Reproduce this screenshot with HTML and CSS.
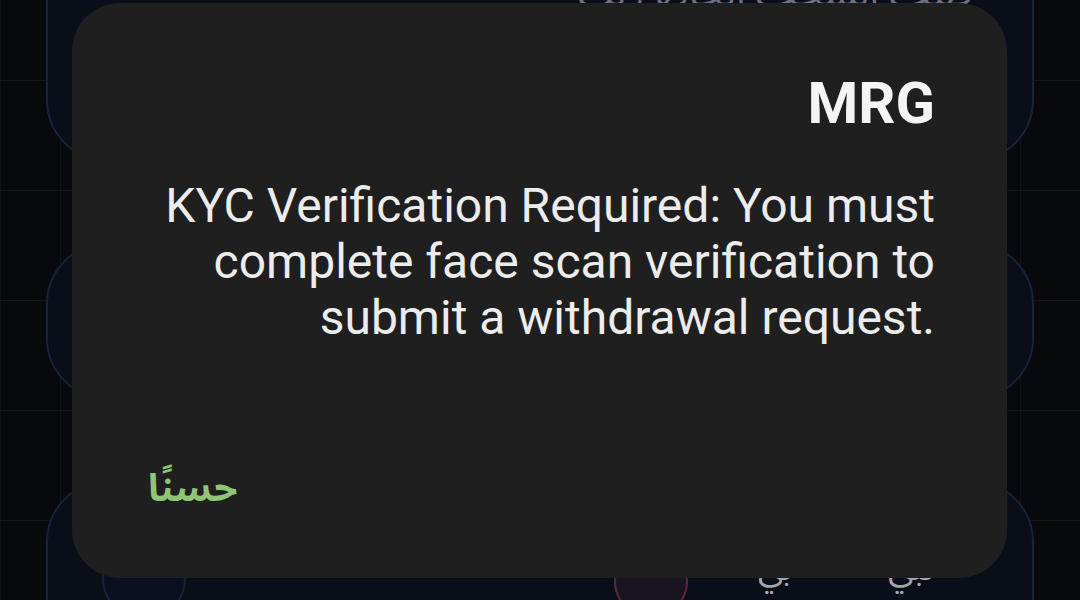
FILE: index.html
```html
<!DOCTYPE html>
<html lang="en">
<head>
<meta charset="utf-8">
<title>MRG</title>
<link rel="stylesheet" href="styles.css">
</head>
<body>
<div class="screen">
  <div class="grid"></div>
  <div class="cards">
    <div class="card card-top">
      <div class="card-caption" dir="rtl">طلب السحب الخاص بك</div>
    </div>
    <div class="card card-mid"></div>
    <div class="card card-bottom">
      <div class="card-row">
        <span class="ring ring-blue"></span>
        <span class="ring ring-red"></span>
        <span class="faint-ar" dir="rtl">بي</span>
        <span class="faint-ar wide" dir="rtl">نبي</span>
      </div>
    </div>
  </div>

  <div class="dialog" role="dialog">
    <h1 class="dialog-title">MRG</h1>
    <p class="dialog-body">KYC Verification Required: You must complete face scan verification to submit a withdrawal request.</p>
    <div class="dialog-actions">
      <button class="dialog-btn" dir="rtl">حسنًا</button>
    </div>
  </div>
</div>
</body>
</html>
```

FILE: styles.css
```css
* { box-sizing: border-box; }
html, body { margin: 0; padding: 0; }
body {
  width: 1080px;
  height: 600px;
  overflow: hidden;
  background: #08090c;
  font-family: Roboto, "Noto Sans", "DejaVu Sans", sans-serif;
}
.screen {
  position: relative;
  width: 1080px;
  height: 600px;
  overflow: hidden;
}
.grid {
  position: absolute;
  inset: 0;
  background-image:
    linear-gradient(to bottom, rgba(40,44,56,0.35) 1px, transparent 1px),
    linear-gradient(to right, rgba(40,44,56,0.25) 1px, transparent 1px);
  background-size: 100% 110px, 60px 100%;
  background-position: 0 -30px, 0 0;
}
.cards {
  position: relative;
  display: flex;
  flex-direction: column;
  gap: 80px;
  padding: 0 46px;
  margin-top: -110px;
}
.card {
  background: #0a0e19;
  border: 2px solid #18223a;
  border-radius: 62px;
}
.card-top { height: 272px; display: flex; justify-content: flex-end; padding: 100px 60px 0 0; }
.card-caption {
  color: #6d7180;
  font-size: 40px;
  line-height: 1;
  margin-top: -18px;
  font-family: "Noto Sans Arabic", "DejaVu Sans", sans-serif;
}
.card-mid { height: 158px; }
.card-bottom { height: 200px; padding: 54px 40px 0 54px; }
.card-row { display: flex; align-items: flex-start; }
.ring {
  display: block;
  width: 84px;
  height: 84px;
  border-radius: 50%;
}
.ring-blue { border: 2px solid #1a2338; background: #0b1020; }
.ring-red { margin-left: 428px; width: 74px; height: 74px; border: 2px solid #5a2a3c; background: #1a1420; margin-top: 8px; }
.faint-ar {
  color: #a4a6ae;
  font-size: 34px;
  line-height: 1;
  margin-top: 16px;
  margin-left: 70px;
  font-family: "Noto Sans Arabic", "DejaVu Sans", sans-serif;
}
.faint-ar.wide { margin-left: 96px; }

.dialog {
  position: absolute;
  left: 72px;
  top: 3px;
  width: 935px;
  height: 575px;
  background: #1f1f1f;
  border-radius: 48px;
  padding: 70px 72px 0 72px;
  display: flex;
  flex-direction: column;
}
.dialog-title {
  margin: 0;
  text-align: right;
  color: #f4f4f4;
  font-size: 58px;
  font-weight: 700;
  line-height: 60px;
}
.dialog-body {
  margin: 45px 0 0 0;
  text-align: right;
  color: #ececec;
  font-size: 48px;
  font-weight: 400;
  line-height: 56px;
}
.dialog-actions {
  margin-top: auto;
  display: flex;
  justify-content: flex-start;
  padding: 0 0 64px 4px;
}
.dialog-btn {
  background: none;
  border: none;
  padding: 0;
  color: #8fc674;
  font-size: 38px;
  font-weight: 700;
  line-height: 50px;
  font-family: "Noto Sans Arabic", "DejaVu Sans", sans-serif;
}
```
